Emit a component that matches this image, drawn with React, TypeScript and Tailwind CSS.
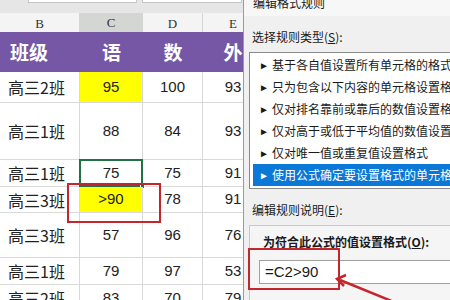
import React from "react";

const rows: { label: string; c: string; d: string; e: string; h: string; yellow?: boolean; sel?: boolean }[] = [
  { label: "高三2班", c: "95", d: "100", e: "93", h: "h-[31px]", yellow: true },
  { label: "高三1班", c: "88", d: "84", e: "93", h: "h-[57px]" },
  { label: "高三1班", c: "75", d: "75", e: "91", h: "h-[27px]", sel: true },
  { label: "高三3班", c: ">90", d: "78", e: "91", h: "h-[26px]", yellow: true },
  { label: "高三3班", c: "57", d: "96", e: "76", h: "h-[45px]" },
  { label: "高三1班", c: "79", d: "97", e: "53", h: "h-[27px]" },
  { label: "高三2班", c: "83", d: "70", e: "79", h: "h-[27px]" },
];

const items = [
  "基于各自值设置所有单元格的格式",
  "只为包含以下内容的单元格设置格式",
  "仅对排名靠前或靠后的数值设置格式",
  "仅对高于或低于平均值的数值设置格式",
  "仅对唯一值或重复值设置格式",
  "使用公式确定要设置格式的单元格",
];

export default function App() {
  return (
    <div className="relative w-[450px] h-[300px] overflow-hidden flex bg-white font-['Noto_Sans','Noto_Sans_CJK_SC',sans-serif] text-black">
      {/* Spreadsheet */}
      <div className="w-[243px] shrink-0 overflow-hidden flex flex-col">
        <div className="h-[13px] shrink-0 bg-[#e6e6e6] flex items-start pl-[28px] gap-[5px]">
          <div className="w-[109px] h-[3px] bg-white border-b border-x border-[#c6c6c6]" />
          <div className="w-[100px] h-[3px] bg-white border-b border-x border-[#c6c6c6]" />
        </div>
        <div className="h-[19px] shrink-0 grid grid-cols-[80px_63px_60px_60px] bg-[#f4f4f4] font-['Liberation_Serif',serif] text-[13px] text-[#333]">
          <div className="flex items-center justify-center border-r border-[#d6d6d6]">B</div>
          <div className="flex items-center justify-center border-r border-[#d6d6d6] bg-[#d4d6d4] border-b-2 border-b-[#217346]">C</div>
          <div className="flex items-center justify-center border-r border-[#d6d6d6]">D</div>
          <div className="flex items-center justify-center">E</div>
        </div>
        <div className="h-[40px] shrink-0 grid grid-cols-[80px_63px_60px_60px] bg-[#7657a6] text-white font-bold text-[19px] font-['Noto_Sans_CJK_SC',sans-serif]">
          <div className="flex items-center pl-[10px]">班级</div>
          <div className="flex items-center justify-center">语</div>
          <div className="flex items-center justify-center">数</div>
          <div className="flex items-center justify-center">外</div>
        </div>
        {rows.map((r, i) => (
          <div key={i} className={`${r.h} shrink-0 grid grid-cols-[80px_63px_60px_60px] text-[15px] font-['Liberation_Sans','Noto_Sans_CJK_SC',sans-serif] text-[#222]`}>
            <div className="flex items-center pl-[8px] border-r border-b border-[#d9d9d9] text-[16px] font-['Noto_Sans_CJK_SC',sans-serif]">{r.label}</div>
            <div
              className={`relative flex items-center justify-center border-r border-b border-[#d9d9d9] ${r.yellow ? "bg-[#ffff00]" : ""}`}
            >
              {r.c}
              {r.sel && (
                <>
                  <div className="absolute -left-px -top-px -right-px -bottom-px border-2 border-[#217346]" />
                  <div className="absolute -right-[3px] -bottom-[3px] w-[5px] h-[5px] bg-[#217346] border border-white" />
                </>
              )}
            </div>
            <div className="flex items-center justify-center border-r border-b border-[#d9d9d9]">{r.d}</div>
            <div className="flex items-center justify-center border-b border-[#d9d9d9]">{r.e}</div>
          </div>
        ))}
      </div>

      {/* Dialog */}
      <div className="flex-1 flex flex-col border-l border-[#9a9a9a] bg-[#f0f0f0] text-[12px] font-['Noto_Sans_CJK_SC',sans-serif] text-[#1a1a1a]">
        <div className="h-[19px] shrink-0 bg-[#f7f7f7] pl-[9px] leading-[12px] -mt-[3px]">编辑格式规则</div>
        <div className="pl-[8px] pt-[14px] h-[36px] shrink-0 leading-[14px]">选择规则类型(<span className="underline">S</span>):</div>
        <div className="ml-[5px] h-[137px] shrink-0 bg-white border-l border-t border-b border-[#8a8a8a] pt-[1px] pl-[3px] flex flex-col">
          {items.map((t, i) => (
            <div
              key={i}
              className={`h-[22px] shrink-0 flex items-center whitespace-nowrap overflow-hidden ${i === 5 ? "bg-[#0a78d7] text-white" : ""}`}
            >
              <span className="w-[19px] shrink-0 pl-[6px] text-[10px] leading-none">&#9658;</span>
              <span>{t}</span>
            </div>
          ))}
        </div>
        <div className="pl-[8px] pt-[14px] h-[36px] shrink-0 leading-[14px]">编辑规则说明(<span className="underline">E</span>):</div>
        <div className="ml-[5px] flex-1 bg-[#f5f5f5] border-l border-t border-[#c8c8c8] flex flex-col">
          <div className="pl-[13px] pt-[9px] h-[34px] shrink-0 font-bold leading-[14px] whitespace-nowrap">为符合此公式的值设置格式(<span className="underline">O</span>):</div>
          <div className="ml-[9px] h-[24px] shrink-0 bg-white border-l border-y border-[#a0a0a0] flex items-center pl-[5px] text-[15px] font-['Liberation_Sans',sans-serif]">
            =C2&gt;90
          </div>
        </div>
      </div>

      {/* Annotations */}
      <div className="absolute left-[67px] top-[183px] w-[94px] h-[40px] border-2 border-[#c4262e]" />
      <div className="absolute left-[248px] top-[248px] w-[92px] h-[42px] border-2 border-[#c4262e]" />
      <svg className="absolute left-0 top-0 pointer-events-none" width="450" height="300" viewBox="0 0 450 300">
        <line x1="394" y1="302" x2="340" y2="280" stroke="#c4262e" strokeWidth="2.5" />
        <path d="M346 275 L337 279 L344 286" fill="none" stroke="#c4262e" strokeWidth="2.5" />
      </svg>
    </div>
  );
}
